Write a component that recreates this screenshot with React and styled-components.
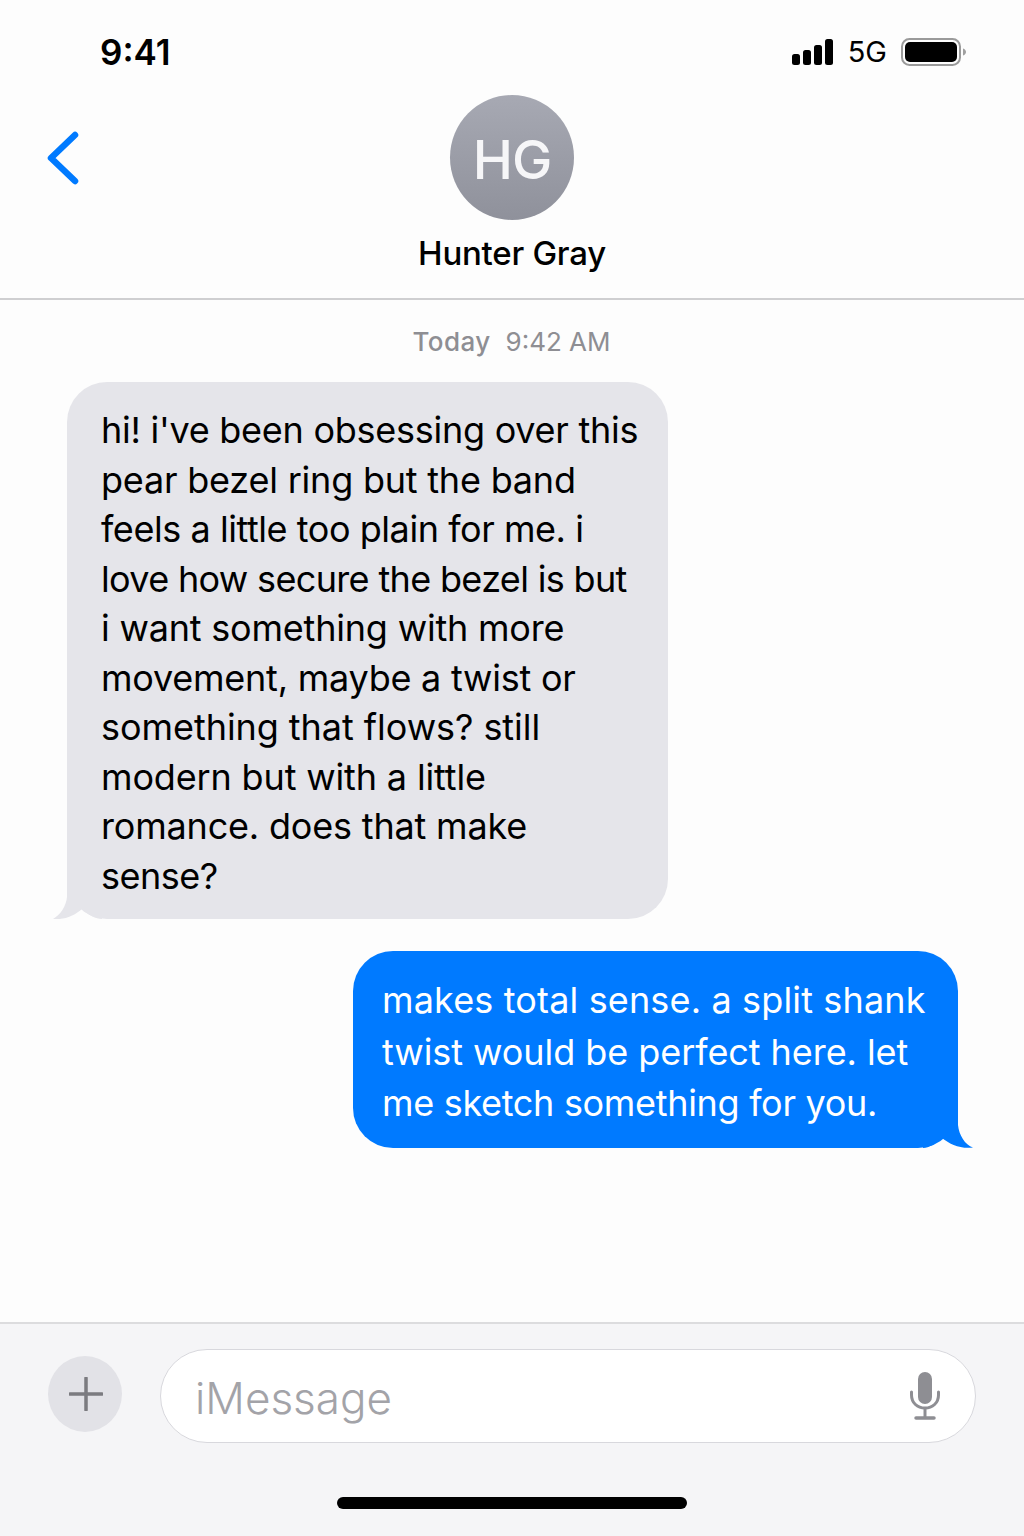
import styled, { createGlobalStyle } from 'styled-components';
import React from 'react';

const GlobalStyle = createGlobalStyle`
  html, body {
    margin: 0;
    padding: 0;
    background: #fdfdfd;
  }
  * {
    box-sizing: border-box;
  }
`;

const Phone = styled.div`
  width: 1024px;
  height: 1536px;
  display: flex;
  flex-direction: column;
  background: #fdfdfd;
  color: #000;
  font-family: Inter, "Liberation Sans", sans-serif;
  overflow: hidden;
`;

const StatusBar = styled.div`
  height: 95px;
  flex: none;
  display: flex;
  justify-content: space-between;
  align-items: flex-start;
  padding: 32px 57px 0 100px;
`;

const Clock = styled.div`
  font-size: 35px;
  line-height: 40px;
  font-weight: 600;
`;

const StatusIcons = styled.div`
  display: flex;
  align-items: center;
  height: 40px;
  gap: 14px;
`;

const NetworkLabel = styled.span`
  font-size: 29px;
  line-height: 40px;
  font-weight: 400;
`;

const Header = styled.header`
  position: relative;
  height: 205px;
  flex: none;
  display: flex;
  flex-direction: column;
  align-items: center;
  border-bottom: 2px solid #cfcfd1;
`;

const BackButton = styled.div`
  position: absolute;
  left: 45px;
  top: 36px;
  display: flex;
`;

const Avatar = styled.div`
  width: 124px;
  height: 125px;
  padding-top: 3px;
  border-radius: 50%;
  display: flex;
  align-items: center;
  justify-content: center;
  background: linear-gradient(180deg, #a7a9b3 0%, #8f919b 100%);
  color: #f6f6f8;
  font-size: 54px;
  font-weight: 500;
  letter-spacing: -1px;
`;

const ContactName = styled.div`
  margin-top: 13px;
  font-size: 33px;
  line-height: 40px;
  font-weight: 500;
  letter-spacing: -0.25px;
`;

const Thread = styled.main`
  flex: 1;
  display: flex;
  flex-direction: column;
  padding-top: 25px;
`;

const Timestamp = styled.div`
  height: 34px;
  display: flex;
  justify-content: center;
  gap: 15px;
  padding-right: 1px;
  font-size: 26px;
  line-height: 34px;
  color: #8e8e93;
`;

const TimestampDay = styled.span`
  font-weight: 500;
  letter-spacing: 0.4px;
`;

const Bubble = styled.div`
  position: relative;
  align-self: ${(p) => (p.$sent ? 'flex-end' : 'flex-start')};
  width: ${(p) => (p.$sent ? '605px' : '601px')};
  margin: ${(p) => (p.$sent ? '32px 66px 0 0' : '23px 0 0 67px')};
  padding: ${(p) => (p.$sent ? '24px 0 18px 29px' : '24px 0 18px 34px')};
  border-radius: 40px;
  background: ${(p) => (p.$sent ? '#007aff' : '#e5e5ea')};
  color: ${(p) => (p.$sent ? '#fff' : '#000')};
  font-size: 36px;
  line-height: ${(p) => (p.$sent ? '51.5px' : '49.55px')};
`;

const Line = styled.div`
  white-space: nowrap;
  letter-spacing: ${(p) => p.$track}px;
`;

const Tail = styled.svg`
  position: absolute;
  bottom: 0;
  ${(p) => (p.$sent ? 'right: -15px;' : 'left: -15px;')}
`;

const Composer = styled.footer`
  position: relative;
  height: 214px;
  flex: none;
  display: flex;
  align-items: flex-start;
  padding: 25px 48px 0 48px;
  gap: 38px;
  background: #f5f5f7;
  border-top: 2px solid #dcdcde;
`;

const PlusButton = styled.div`
  width: 74px;
  height: 76px;
  margin-top: 7px;
  padding-left: 1px;
  flex: none;
  border-radius: 50%;
  background: #e2e2e7;
  display: flex;
  align-items: center;
  justify-content: center;
`;

const InputField = styled.div`
  flex: 1;
  height: 94px;
  display: flex;
  align-items: center;
  justify-content: space-between;
  padding: 0 35px 0 34px;
  background: #fff;
  border: 1.5px solid #d8d8dd;
  border-radius: 47px;
`;

const Placeholder = styled.span`
  padding-top: 3px;
  font-size: 44px;
  font-weight: 300;
  color: #a3a3a8;
`;

const HomeIndicator = styled.div`
  position: absolute;
  left: 337px;
  bottom: 27px;
  width: 350px;
  height: 12px;
  border-radius: 6px;
  background: #000;
`;

const received = [
  { text: "hi! i've been obsessing over this", track: -0.26 },
  { text: 'pear bezel ring but the band', track: -0.21 },
  { text: 'feels a little too plain for me. i', track: -0.44 },
  { text: 'love how secure the bezel is but', track: -0.66 },
  { text: 'i want something with more', track: -0.2 },
  { text: 'movement, maybe a twist or', track: -0.23 },
  { text: 'something that flows? still', track: -0.05 },
  { text: 'modern but with a little', track: -0.15 },
  { text: 'romance. does that make', track: -0.18 },
  { text: 'sense?', track: -0.52 },
];

const sent = [
  { text: 'makes total sense. a split shank', track: 0.15 },
  { text: 'twist would be perfect here. let', track: -0.06 },
  { text: 'me sketch something for you.', track: -0.31 },
];

const SignalIcon = () => (
  <svg width="42" height="26" viewBox="0 0 42 26">
    <rect x="0" y="15" width="8" height="11" rx="2.5" fill="#000" />
    <rect x="11" y="11" width="8" height="15" rx="2.5" fill="#000" />
    <rect x="22" y="6" width="8" height="20" rx="2.5" fill="#000" />
    <rect x="33" y="0" width="8" height="26" rx="2.5" fill="#000" />
  </svg>
);

const BatteryIcon = () => (
  <svg width="66" height="28" viewBox="0 0 66 28">
    <rect x="1" y="1" width="58" height="26" rx="7.5" fill="none" stroke="#9a9a9a" strokeWidth="2" />
    <rect x="4" y="4" width="52" height="20" rx="5" fill="#000" />
    <path d="M62 10.5c2 .6 3 2 3 3.5s-1 2.9-3 3.5z" fill="#a0a0a0" />
  </svg>
);

const App = () => {
  return (
    <Phone>
      <GlobalStyle />
      <StatusBar>
        <Clock>9:41</Clock>
        <StatusIcons>
          <SignalIcon />
          <NetworkLabel>5G</NetworkLabel>
          <BatteryIcon />
        </StatusIcons>
      </StatusBar>
      <Header>
        <BackButton>
          <svg width="36" height="56" viewBox="0 0 36 56">
            <path d="M30 4 L6 27 L30 50" fill="none" stroke="#007aff" strokeWidth="6.5" strokeLinecap="round" strokeLinejoin="round" />
          </svg>
        </BackButton>
        <Avatar>HG</Avatar>
        <ContactName>Hunter Gray</ContactName>
      </Header>
      <Thread>
        <Timestamp>
          <TimestampDay>Today</TimestampDay>
          <span>9:42 AM</span>
        </Timestamp>
        <Bubble>
          <Tail width="50" height="42" viewBox="0 -12 50 42">
            <path d="M15 -12 L15 8 C14 18 8 26 1 30 C12 31 22 27 30 20 C36 26 44 30 50 30 L50 -12 Z" fill="#e5e5ea" />
          </Tail>
          {received.map((line) => (
            <Line key={line.text} $track={line.track}>{line.text}</Line>
          ))}
        </Bubble>
        <Bubble $sent>
          <Tail $sent width="50" height="42" viewBox="0 -12 50 42">
            <path d="M35 -12 L35 7 C36 17 42 27 50 29.5 C38 31 27 27 18 19 C13 26 6 30 0 30 L0 -12 Z" fill="#007aff" />
          </Tail>
          {sent.map((line) => (
            <Line key={line.text} $track={line.track}>{line.text}</Line>
          ))}
        </Bubble>
      </Thread>
      <Composer>
        <PlusButton>
          <svg width="34" height="34" viewBox="0 0 34 34">
            <path d="M17 1 V33 M1 17 H33" stroke="#7b7b80" strokeWidth="3.5" strokeLinecap="round" />
          </svg>
        </PlusButton>
        <InputField>
          <Placeholder>iMessage</Placeholder>
          <svg width="30" height="48" viewBox="0 0 30 48">
            <rect x="8" y="0" width="14" height="32" rx="7" fill="#8e8e93" />
            <path d="M1.5 20 V23 C1.5 31 7.5 36 15 36 C22.5 36 28.5 31 28.5 23 V20" fill="none" stroke="#8e8e93" strokeWidth="3" strokeLinecap="round" />
            <path d="M15 36 V45" stroke="#8e8e93" strokeWidth="3" />
            <path d="M6 46 H24" stroke="#8e8e93" strokeWidth="3.5" strokeLinecap="round" />
          </svg>
        </InputField>
        <HomeIndicator />
      </Composer>
    </Phone>
  );
};

export default App;
